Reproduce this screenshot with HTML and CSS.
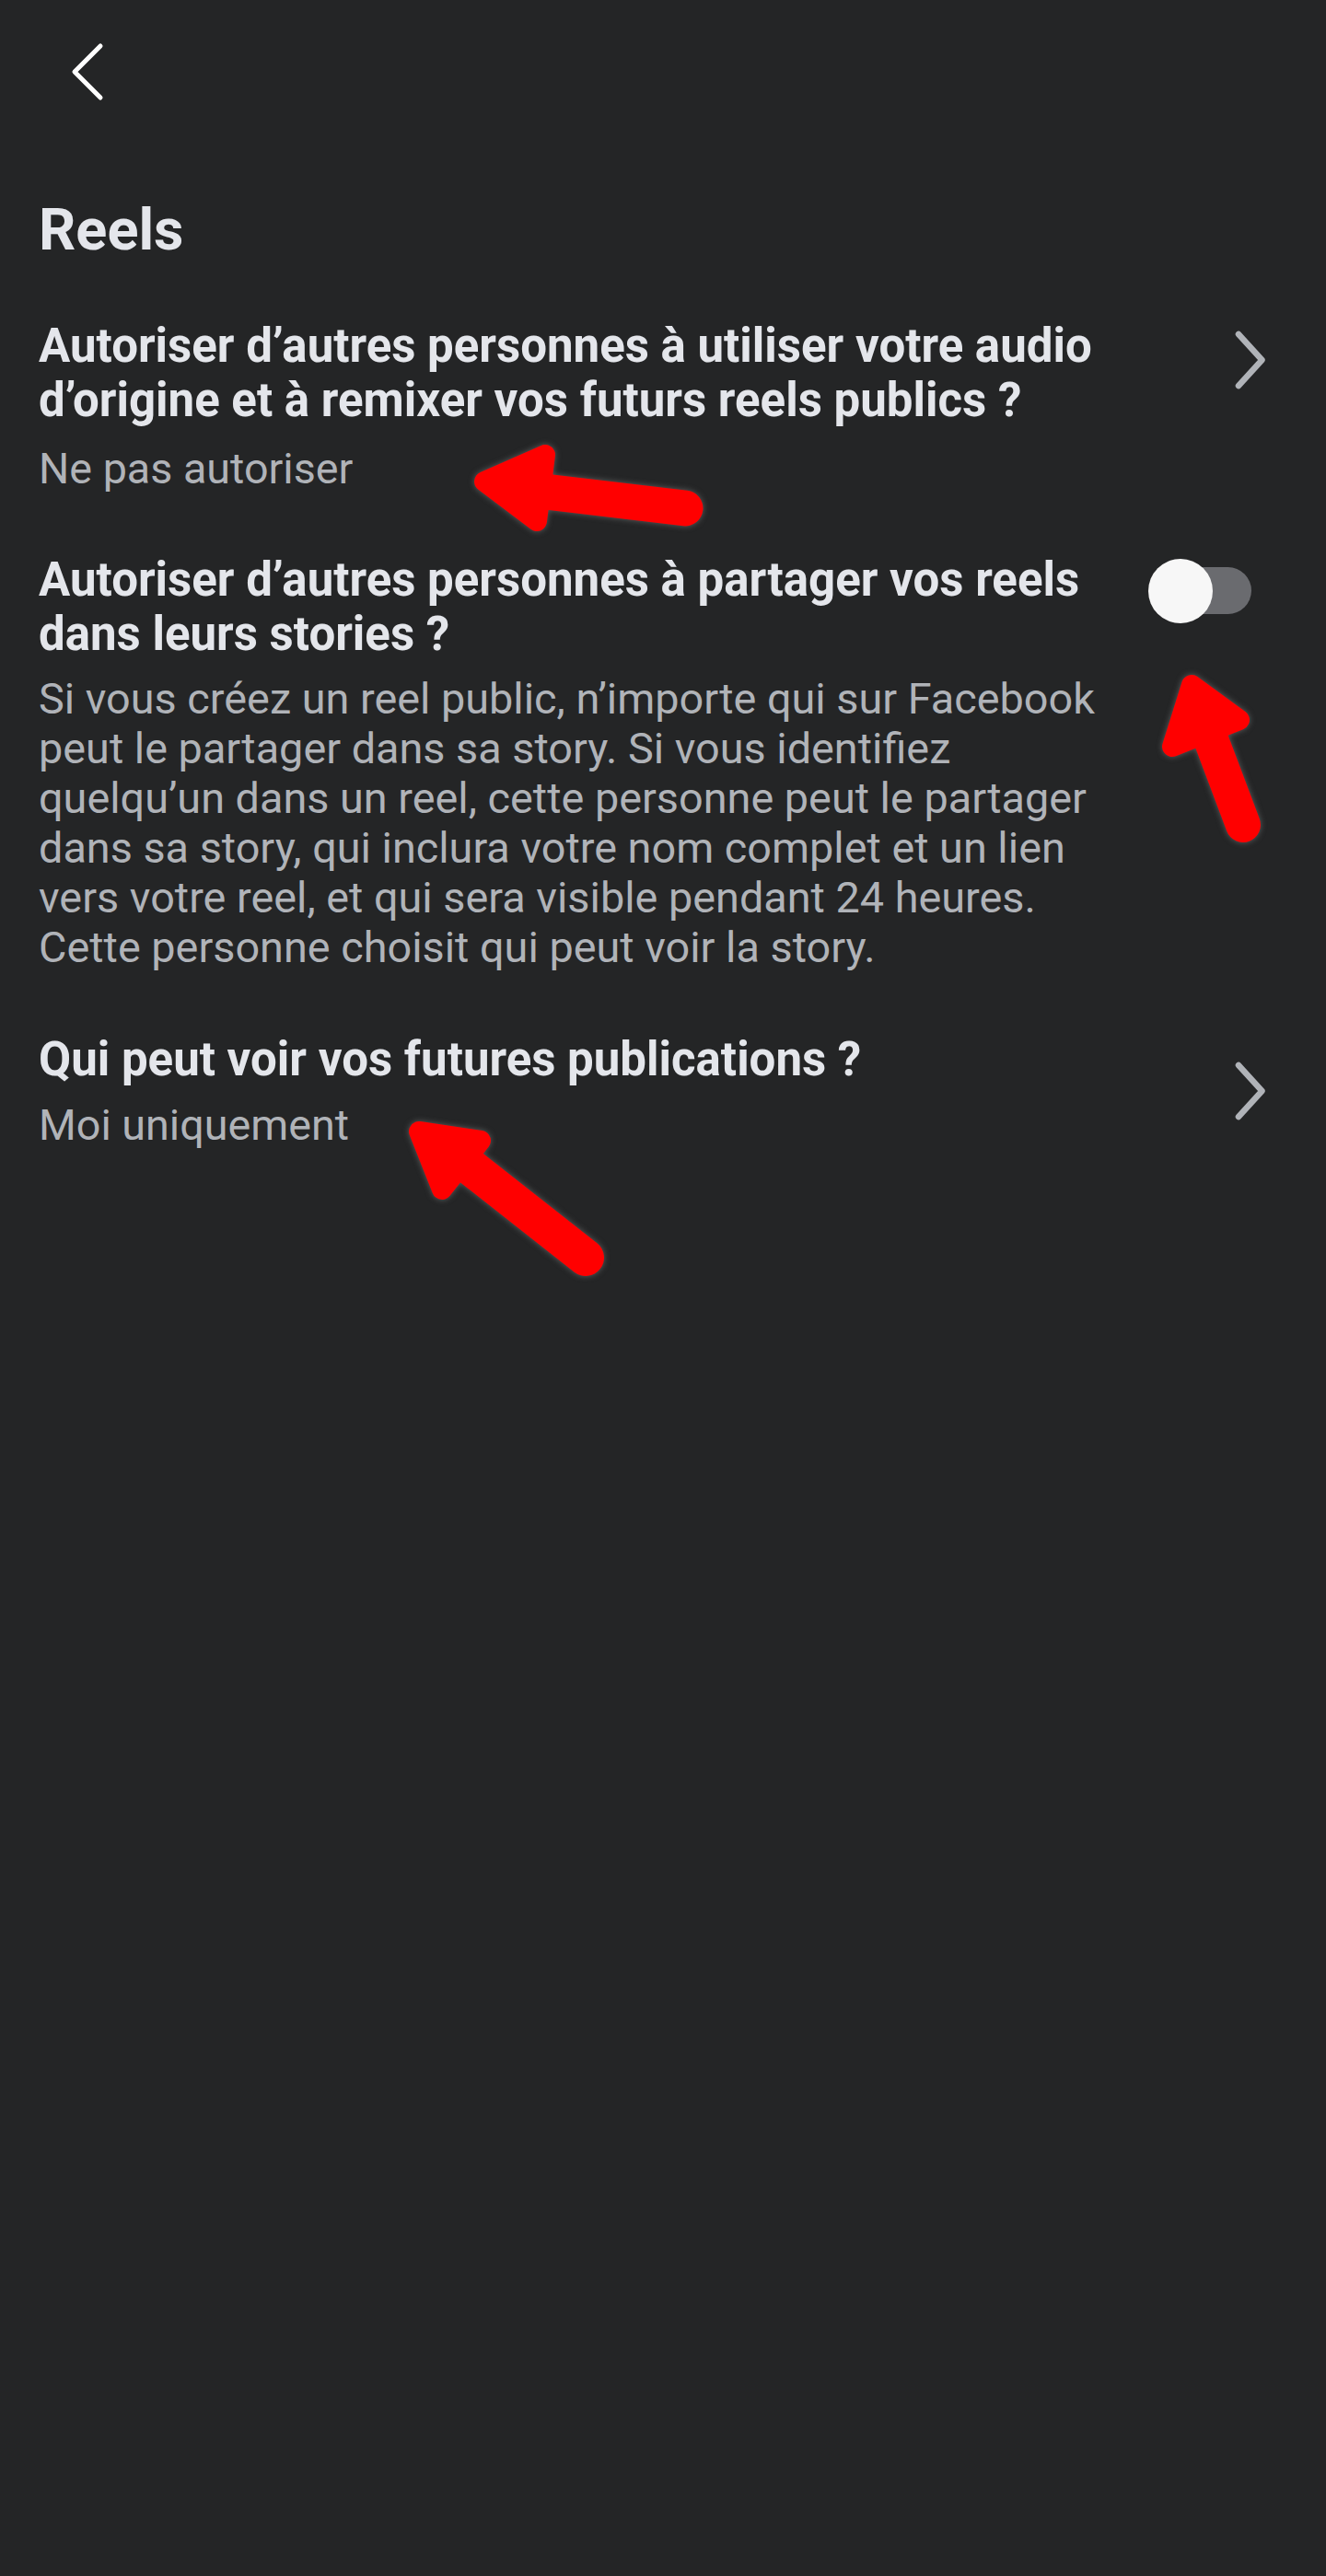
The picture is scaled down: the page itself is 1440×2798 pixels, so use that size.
FILE: index.html
```html
<!DOCTYPE html>
<html lang="fr">
<head>
<meta charset="utf-8">
<title>Reels</title>
<link rel="stylesheet" href="styles.css">
</head>
<body>
<div class="page">
  <header class="topbar">
    <svg class="back" width="38" height="66" viewBox="0 0 38 66" aria-hidden="true">
      <polyline points="33,5 5,33 33,61" fill="none" stroke="#ffffff" stroke-width="5" stroke-linecap="round" stroke-linejoin="round"/>
    </svg>
  </header>

  <h1 class="section-title">Reels</h1>

  <div class="row row-1">
    <div class="row-text">
      <div class="row-title">Autoriser d’autres personnes à utiliser votre audio d’origine et à remixer vos futurs reels publics ?</div>
      <div class="row-sub sub-1">Ne pas autoriser</div>
    </div>
    <svg class="chev chev-top" width="34" height="64" viewBox="0 0 34 64" aria-hidden="true">
      <polyline points="4,4 29.5,32 4,60" fill="none" stroke="#b0b3b8" stroke-width="6.5" stroke-linecap="round" stroke-linejoin="round"/>
    </svg>
  </div>

  <div class="row row-2">
    <div class="row-text">
      <div class="row-title">Autoriser d’autres personnes à partager vos reels dans leurs stories ?</div>
      <div class="row-desc">Si vous créez un reel public, n’importe qui sur Facebook peut le partager dans sa story. Si vous identifiez quelqu’un dans un reel, cette personne peut le partager dans sa story, qui inclura votre nom complet et un lien vers votre reel, et qui sera visible pendant 24 heures. Cette personne choisit qui peut voir la story.</div>
    </div>
    <div class="toggle" role="switch" aria-checked="false">
      <span class="toggle-track"></span>
      <span class="toggle-knob"></span>
    </div>
  </div>

  <div class="row row-3">
    <div class="row-text">
      <div class="row-title">Qui peut voir vos futures publications ?</div>
      <div class="row-sub sub-3">Moi uniquement</div>
    </div>
    <svg class="chev chev-mid" width="34" height="64" viewBox="0 0 34 64" aria-hidden="true">
      <polyline points="4,4 29.5,32 4,60" fill="none" stroke="#b0b3b8" stroke-width="6.5" stroke-linecap="round" stroke-linejoin="round"/>
    </svg>
  </div>

  <svg class="annotations" width="1440" height="1400" viewBox="0 0 1440 1400" aria-hidden="true">
    <g class="arrow">
      <line x1="575" y1="532" x2="744" y2="552" stroke="#ff0000" stroke-width="39" stroke-linecap="round"/>
      <polygon points="526,523 592,494 583,566" fill="#ff0000" stroke="#ff0000" stroke-width="22" stroke-linejoin="round"/>
    </g>
    <g class="arrow">
      <line x1="1312" y1="795" x2="1350" y2="896" stroke="#ff0000" stroke-width="38" stroke-linecap="round"/>
      <polygon points="1294,744 1273,811 1346,782" fill="#ff0000" stroke="#ff0000" stroke-width="22" stroke-linejoin="round"/>
    </g>
    <g class="arrow">
      <line x1="495" y1="1255" x2="636" y2="1366" stroke="#ff0000" stroke-width="40" stroke-linecap="round"/>
      <polygon points="455,1229 522,1239 480,1292" fill="#ff0000" stroke="#ff0000" stroke-width="22" stroke-linejoin="round"/>
    </g>
  </svg>
</div>
</body>
</html>
```

FILE: styles.css
```css
html, body {
  margin: 0;
  padding: 0;
  background: #242526;
}

.page {
  position: relative;
  width: 1440px;
  min-height: 2798px;
  background: #242526;
  font-family: Roboto, "Noto Sans", "Liberation Sans", sans-serif;
  color: #e4e6eb;
}

.topbar {
  height: 213px;
  padding-left: 76px;
  padding-top: 45px;
  box-sizing: border-box;
}

.back {
  display: block;
}

.section-title {
  margin: 0;
  padding-left: 42px;
  font-size: 63px;
  font-weight: 700;
  line-height: 74px;
  color: #e4e6eb;
}

.row {
  display: flex;
  align-items: flex-start;
  padding: 0 65px 0 42px;
}

.row-1 {
  margin-top: 59px;
}

.row-2 {
  margin-top: 64px;
}

.row-3 {
  margin-top: 65px;
}

.row-text {
  width: 1180px;
}

.row-title {
  font-size: 51px;
  font-weight: 700;
  line-height: 59px;
  color: #e4e6eb;
}

.row-sub {
  font-size: 46.7px;
  font-weight: 400;
  line-height: 54px;
  color: #b0b3b8;
}

.sub-1 {
  margin-top: 18px;
}

.sub-3 {
  margin-top: 15px;
}

.row-desc {
  margin-top: 14px;
  font-size: 46.8px;
  font-weight: 400;
  line-height: 54px;
  color: #b0b3b8;
}

.chev {
  display: block;
  margin-left: auto;
  flex: none;
}

.chev-top {
  margin-top: 13px;
}

.chev-mid {
  align-self: center;
}

.toggle {
  position: relative;
  flex: none;
  margin-left: auto;
  margin-right: 16px;
  margin-top: 7px;
  width: 112px;
  height: 70px;
}

.toggle-track {
  position: absolute;
  right: 0;
  top: 9px;
  width: 96px;
  height: 51px;
  border-radius: 26px;
  background: #6a6b6f;
}

.toggle-knob {
  position: absolute;
  left: 0;
  top: 0;
  width: 70px;
  height: 70px;
  border-radius: 50%;
  background: #f7f7f7;
}

.annotations {
  position: absolute;
  left: 0;
  top: 0;
  pointer-events: none;
}

.arrow {
  filter: drop-shadow(0 0 3px rgba(120, 120, 120, 0.7));
}
```
